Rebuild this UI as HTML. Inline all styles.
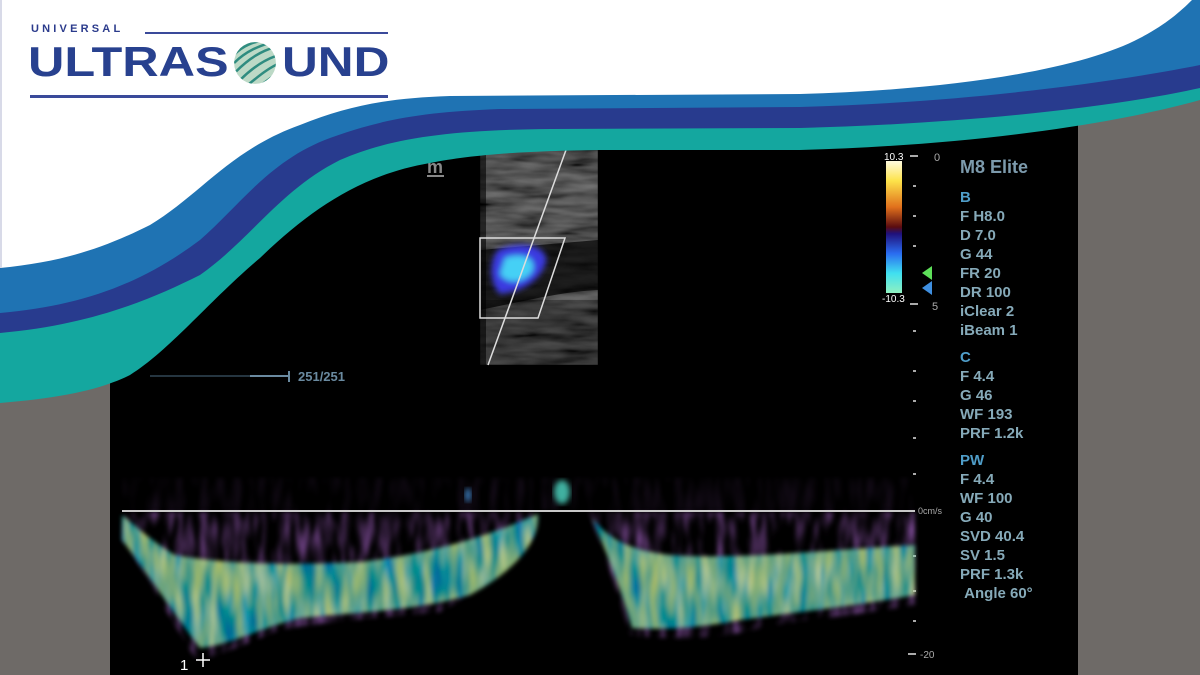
<!DOCTYPE html>
<html><head><meta charset="utf-8"><style>
html,body{margin:0;padding:0;width:1200px;height:675px;overflow:hidden;background:#6e6a67;font-family:"Liberation Sans",sans-serif}
.abs{position:absolute}
.info{position:absolute;left:960px;color:#86aab9;font-family:"Liberation Sans Narrow","Liberation Sans",sans-serif;font-weight:bold;font-size:15px;line-height:19px;white-space:nowrap}
.hd{color:#4f9dc8}
.lg{position:absolute;top:40px;font-size:42px;font-weight:bold;color:#28418f;line-height:44px;transform-origin:0 0;white-space:nowrap}
</style></head><body>
<svg class="abs" style="left:0;top:0" width="1200" height="675" viewBox="0 0 1200 675">
<defs>
<linearGradient id="cb" x1="0" y1="0" x2="0" y2="1">
<stop offset="0" stop-color="#fffbe0"/><stop offset="0.15" stop-color="#fde34a"/><stop offset="0.35" stop-color="#e0701c"/><stop offset="0.5" stop-color="#5a0c10"/><stop offset="0.55" stop-color="#20107a"/><stop offset="0.7" stop-color="#2a6cf0"/><stop offset="0.85" stop-color="#40e0f0"/><stop offset="1" stop-color="#8ff0c0"/></linearGradient>
<filter id="bl"><feGaussianBlur stdDeviation="3"/></filter>
<filter id="tex" x="0" y="0" width="1" height="1"><feTurbulence type="fractalNoise" baseFrequency="0.02 0.12" numOctaves="3" seed="3"/><feColorMatrix values="0.9 0 0 0 -0.15  0.9 0 0 0 -0.15  0.9 0 0 0 -0.15  0 0 0 0 1"/><feComposite in2="SourceGraphic" operator="in"/><feGaussianBlur stdDeviation="0.6"/></filter>
<filter id="teal" x="-5%" y="-5%" width="110%" height="110%"><feTurbulence type="fractalNoise" baseFrequency="0.12 0.02" numOctaves="2" seed="7" result="n"/><feColorMatrix in="n" values="2.0 0 0 0 -0.8  1.3 0 0 0 0.05  -0.6 0 0 0 0.75  0 0 0 0 1" result="c"/><feComposite in="c" in2="SourceGraphic" operator="in"/><feGaussianBlur stdDeviation="2"/></filter>
<filter id="purp" x="-5%" y="-5%" width="110%" height="110%"><feTurbulence type="fractalNoise" baseFrequency="0.12 0.025" numOctaves="2" seed="11" result="n"/><feColorMatrix in="n" values="0 0 0 0 0.3  0 0 0 0 0.1  0 0 0 0 0.45  1.8 0 0 0 -0.75" result="c"/><feComposite in="c" in2="SourceGraphic" operator="in"/><feGaussianBlur stdDeviation="2"/></filter>
<clipPath id="bm"><rect x="480" y="150" width="118" height="215"/></clipPath>
</defs>
<rect x="110" y="100" width="968" height="575" fill="#000"/>
<g clip-path="url(#bm)">
<rect x="480" y="150" width="118" height="215" fill="#fff" filter="url(#tex)" opacity="0.55"/>
<path d="M480,250 L598,240 L598,290 C560,292 530,300 480,310Z" fill="#000" opacity="0.7"/>
<rect x="480" y="300" width="118" height="65" fill="#000" opacity="0.3"/>
<rect x="480" y="150" width="6" height="215" fill="#000" opacity="0.6"/>
</g>
<g filter="url(#bl)"><path d="M498,250 C520,240 548,245 546,262 C540,282 520,292 500,294 C490,285 488,262 498,250Z" fill="#3a3ae0"/><path d="M505,258 C522,252 538,258 532,272 C522,284 506,284 500,274Z" fill="#45d0f5"/></g>
<path d="M480,238 L565,238 L538,318 L480,318Z" fill="none" stroke="#ddd" stroke-width="1.5"/>
<line x1="566" y1="150" x2="488" y2="365" stroke="#ddd" stroke-width="1.5"/>
<text x="427" y="173" fill="#888" font-size="18" font-weight="bold" font-family="Liberation Sans">m</text>
<rect x="427" y="175" width="17" height="2" fill="#888"/>
<rect x="886" y="161" width="16" height="132" fill="url(#cb)"/>
<text x="884" y="160" fill="#fff" font-size="10" font-family="Liberation Sans Narrow,Liberation Sans">10.3</text>
<text x="882" y="302" fill="#fff" font-size="10" font-family="Liberation Sans Narrow,Liberation Sans">-10.3</text>
<polygon points="922,273 932,266 932,280" fill="#5ee05a"/>
<polygon points="922,288 932,281 932,295" fill="#3f8fe0"/>
<g fill="#aaa"><rect x="910" y="155" width="8" height="2"/><rect x="910" y="303" width="8" height="2"/>
<rect x="913" y="185" width="3" height="2"/><rect x="913" y="215" width="3" height="2"/><rect x="913" y="245" width="3" height="2"/><rect x="913" y="330" width="3" height="2"/><rect x="913" y="370" width="3" height="2"/><rect x="913" y="400" width="3" height="2"/><rect x="913" y="437" width="3" height="2"/><rect x="913" y="473" width="3" height="2"/><rect x="913" y="555" width="3" height="2"/><rect x="913" y="590" width="3" height="2"/><rect x="913" y="620" width="3" height="2"/><rect x="908" y="653" width="8" height="2"/></g>
<text x="934" y="161" fill="#aaa" font-size="11">0</text>
<text x="932" y="310" fill="#aaa" font-size="11">5</text>
<text x="918" y="514" fill="#aaa" font-size="9">0cm/s</text>
<text x="920" y="658" fill="#aaa" font-size="10">-20</text>
<line x1="150" y1="376" x2="290" y2="376" stroke="#4a6a80" stroke-width="1"/>
<line x1="250" y1="376" x2="290" y2="376" stroke="#6a8aa0" stroke-width="2"/>
<rect x="288" y="371" width="2" height="11" fill="#6a8aa0"/>
<text x="298" y="381" fill="#6a8aa0" font-size="13" font-weight="bold">251/251</text>
<rect x="122" y="478" width="790" height="32" fill="#fff" filter="url(#purp)" opacity="0.18"/>
<path d="M122,512 L540,512 L540,525 C520,560 480,590 440,612 C380,618 320,622 280,630 C240,645 215,660 195,658 C170,620 145,570 122,540Z" fill="#fff" filter="url(#purp)"/>
<path d="M588,512 L915,512 L915,605 C860,615 800,620 760,628 C720,640 660,640 630,635 C615,580 600,545 588,512Z" fill="#fff" filter="url(#purp)"/>
<g opacity="0.72">
<path d="M122,515 C135,525 150,540 175,555 C230,565 300,565 360,562 C420,555 480,540 538,514 C540,535 525,565 470,595 C420,610 360,612 300,618 C260,628 230,645 200,648 C175,615 145,570 122,540Z" fill="#fff" filter="url(#teal)"/>
<path d="M592,518 C610,540 630,550 670,555 C740,560 820,550 915,545 L915,595 C860,605 800,612 740,620 C700,628 660,630 632,628 C620,585 605,550 592,518Z" fill="#fff" filter="url(#teal)"/>
</g>
<ellipse cx="562" cy="492" rx="8" ry="12" fill="#3fb0a0" filter="url(#bl)"/>
<ellipse cx="468" cy="495" rx="3" ry="7" fill="#3a80c0" filter="url(#bl)"/>
<line x1="122" y1="511" x2="915" y2="511" stroke="#c8c8c8" stroke-width="2"/>
<text x="180" y="670" fill="#fff" font-size="15">1</text>
<path d="M196,660 h14 M203,653 v14" stroke="#fff" stroke-width="1.5"/>
<path d="M0,403 C60,398 100,390 130,375 C170,350 210,300 260,258 C310,210 360,175 430,163 C470,155 520,151 600,150 L800,150 C950,146 1100,128 1200,100 L1200,0 L0,0Z" fill="#14a79f"/>
<path d="M0,333 C90,325 150,300 200,275 C250,240 280,190 340,160 C390,138 450,130 550,129 L800,128 C950,124 1100,110 1200,88 L1200,0 L0,0Z" fill="#283b8e"/>
<path d="M0,313 C80,306 140,285 200,240 C240,205 270,160 330,138 C380,120 420,112 500,109 L800,107 C950,103 1100,85 1200,65 L1200,0 L0,0Z" fill="#1f73b3"/>
<path d="M0,268 C60,262 100,250 150,225 C200,195 230,150 300,125 C350,105 390,98 450,96 L800,94 C950,90 1080,70 1140,38 C1165,25 1180,12 1192,0 L0,0Z" fill="#fff"/>
<rect x="0" y="0" width="2" height="268" fill="#d8dae8"/>
</svg>
<div class="abs" style="left:31px;top:23px;font-size:11px;letter-spacing:3.2px;color:#2b3b8c;font-weight:bold">UNIVERSAL</div>
<div class="abs" style="left:145px;top:32px;width:243px;height:2px;background:#3a4a9a"></div>
<div class="lg" style="left:28px;transform:scaleX(1.2)">ULTRAS</div>
<div class="lg" style="left:282px;transform:scaleX(1.18)">UND</div>
<svg class="abs" style="left:232px;top:40px" width="46" height="46" viewBox="0 0 44 44"><defs><clipPath id="c"><circle cx="22" cy="22" r="20"/></clipPath></defs><circle cx="22" cy="22" r="20" fill="#bcd9c6"/><g clip-path="url(#c)" stroke="#2f8c80" stroke-width="2.4" fill="none"><path d="M2,14 C12,4 22,2 30,0"/><path d="M2,22 C14,10 26,6 38,2"/><path d="M4,30 C16,18 28,10 44,6"/><path d="M8,38 C20,26 32,18 46,14"/><path d="M14,44 C26,34 36,26 46,22"/><path d="M24,46 C32,40 40,34 46,30"/></g></svg>
<div class="abs" style="left:30px;top:95px;width:358px;height:3px;background:#3a4a9a"></div>
<div class="info" style="top:158px;font-size:18px;color:#7c9aac">M8 Elite</div>
<div class="info" style="top:188px">
<div class="hd">B</div><div>F H8.0</div><div>D 7.0</div><div>G 44</div><div>FR 20</div><div>DR 100</div><div>iClear 2</div><div>iBeam 1</div>
<div class="hd" style="margin-top:8px">C</div><div>F 4.4</div><div>G 46</div><div>WF 193</div><div>PRF 1.2k</div>
<div class="hd" style="margin-top:8px">PW</div><div>F 4.4</div><div>WF 100</div><div>G 40</div><div>SVD 40.4</div><div>SV 1.5</div><div>PRF 1.3k</div><div>&nbsp;Angle 60°</div>
</div>
</body></html>
